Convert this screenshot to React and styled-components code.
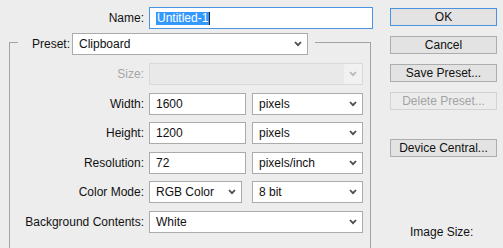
import React from 'react';
import styled, { createGlobalStyle, css } from 'styled-components';

const GlobalStyle = createGlobalStyle`
  html, body {
    margin: 0;
    padding: 0;
    overflow: hidden;
    background: #ededed;
  }
`

const lineColor = '#a3a3a3';

const Page = styled.div`
  display: flex;
  align-items: flex-start;
  height: 248px;
  overflow: hidden;
  background: #ededed;
  font-family: "Liberation Sans", Arial, sans-serif;
  font-size: 12px;
  color: #111;
`

const LeftCol = styled.div`
  display: flex;
  flex-direction: column;
  width: 373px;
`

const NameRow = styled.div`
  display: flex;
  align-items: center;
  margin-top: 7px;
  height: 22px;
`

const Label = styled.div`
  width: ${props => props.$w}px;
  margin-right: 5px;
  text-align: right;
  white-space: nowrap;
  ${props => props.disabled && css`
    color: #a6a6a6;
  `}
`

const Field = styled.div`
  display: flex;
  align-items: center;
  box-sizing: border-box;
  height: 22px;
  width: ${props => props.$w}px;
  padding-left: 6px;
  background: #fff;
  border: 1px solid #ababab;
  white-space: nowrap;
  ${props => props.focused && css`
    border-color: #4a93e0;
  `}
  ${props => props.disabled && css`
    background: #e9e9e9;
    border-color: #d9d9d9;
  `}
`

const Selection = styled.span`
  background: #3399ff;
  color: #fff;
  line-height: 13px;
  padding: 0 1px;
  border-right: 1px solid #222;
`

const ChevronBox = styled.div`
  display: flex;
  align-items: center;
  justify-content: center;
  margin-left: auto;
  width: 18px;
  height: 100%;
  ${props => props.disabled && css`
    background: #f1f1f1;
  `}
`

const Group = styled.div`
  display: flex;
  flex-direction: column;
  margin-top: 4px;
  margin-left: 9px;
  width: 362px;
`

const GroupTop = styled.div`
  display: flex;
  height: 22px;
`

const CornerLeft = styled.div`
  width: 9px;
  margin-top: 9px;
  box-sizing: border-box;
  border-top: 1px solid ${lineColor};
  border-left: 1px solid ${lineColor};
`

const LegendLabel = styled.div`
  display: flex;
  align-items: center;
  width: 54px;
  padding-left: 14px;
  box-sizing: border-box;
  white-space: nowrap;
`

const CornerRight = styled.div`
  flex: 1;
  margin-top: 9px;
  margin-left: 7px;
  box-sizing: border-box;
  border-top: 1px solid ${lineColor};
  border-right: 1px solid ${lineColor};
`

const GroupBody = styled.div`
  display: flex;
  flex-direction: column;
  gap: 7.5px;
  padding: 8px 7px 40px 0;
  border-left: 1px solid ${lineColor};
  border-right: 1px solid ${lineColor};
`

const Row = styled.div`
  display: flex;
  align-items: center;
  height: 22px;
`

const Spacer = styled.div`
  width: ${props => props.$w}px;
`

const RightCol = styled.div`
  display: flex;
  flex-direction: column;
  margin-left: 17px;
  padding-top: 8px;
  width: 107px;
`

const Buttons = styled.div`
  display: flex;
  flex-direction: column;
  gap: 10px;
`

const Button = styled.div`
  display: flex;
  align-items: center;
  justify-content: center;
  box-sizing: border-box;
  height: 18px;
  background: #e3e3e3;
  border: 1px solid #adadad;
  color: #111;
  ${props => props.primary && css`
    border-color: #4a93e0;
  `}
  ${props => props.disabled && css`
    background: #ececec;
    border-color: #d3d3d3;
    color: #a3a3a3;
  `}
  ${props => props.gapTop && css`
    margin-top: 19px;
  `}
`

const ImageSize = styled.div`
  margin-top: 68px;
  padding-left: 20px;
  line-height: 14px;
`

const Chevron = ({ disabled }) => (
  <ChevronBox disabled={disabled}>
    <svg width="8" height="6" viewBox="0 0 8 6">
      <polyline
        points="1,1 4,4.2 7,1"
        fill="none"
        stroke={disabled ? '#b8b8b8' : '#4a4a4a'}
        strokeWidth="1.8"
      />
    </svg>
  </ChevronBox>
)

const Dropdown = ({ w, value, disabled }) => (
  <Field $w={w} disabled={disabled}>
    {value}
    <Chevron disabled={disabled} />
  </Field>
)

const FormRow = ({ label, disabled, children }) => (
  <Row>
    <Label $w={134} disabled={disabled}>{label}</Label>
    {children}
  </Row>
)

const App = () => {
  return (
    <>
      <GlobalStyle />
      <Page>
        <LeftCol>
          <NameRow>
            <Label $w={144}>Name:</Label>
            <Field $w={224} focused>
              <Selection>Untitled-1</Selection>
            </Field>
          </NameRow>
          <Group>
            <GroupTop>
              <CornerLeft />
              <LegendLabel>Preset:</LegendLabel>
              <Dropdown w={236} value="Clipboard" />
              <CornerRight />
            </GroupTop>
            <GroupBody>
              <FormRow label="Size:" disabled>
                <Dropdown w={214} value="" disabled />
              </FormRow>
              <FormRow label="Width:">
                <Field $w={97}>1600</Field>
                <Spacer $w={6} />
                <Dropdown w={111} value="pixels" />
              </FormRow>
              <FormRow label="Height:">
                <Field $w={97}>1200</Field>
                <Spacer $w={6} />
                <Dropdown w={111} value="pixels" />
              </FormRow>
              <FormRow label="Resolution:">
                <Field $w={97}>72</Field>
                <Spacer $w={6} />
                <Dropdown w={111} value="pixels/inch" />
              </FormRow>
              <FormRow label="Color Mode:">
                <Dropdown w={93} value="RGB Color" />
                <Spacer $w={10} />
                <Dropdown w={111} value="8 bit" />
              </FormRow>
              <FormRow label="Background Contents:">
                <Dropdown w={214} value="White" />
              </FormRow>
            </GroupBody>
          </Group>
        </LeftCol>
        <RightCol>
          <Buttons>
            <Button primary>OK</Button>
            <Button>Cancel</Button>
            <Button>Save Preset...</Button>
            <Button disabled>Delete Preset...</Button>
            <Button gapTop>Device Central...</Button>
          </Buttons>
          <ImageSize>Image Size:</ImageSize>
        </RightCol>
      </Page>
    </>
  );
}

export default App;
